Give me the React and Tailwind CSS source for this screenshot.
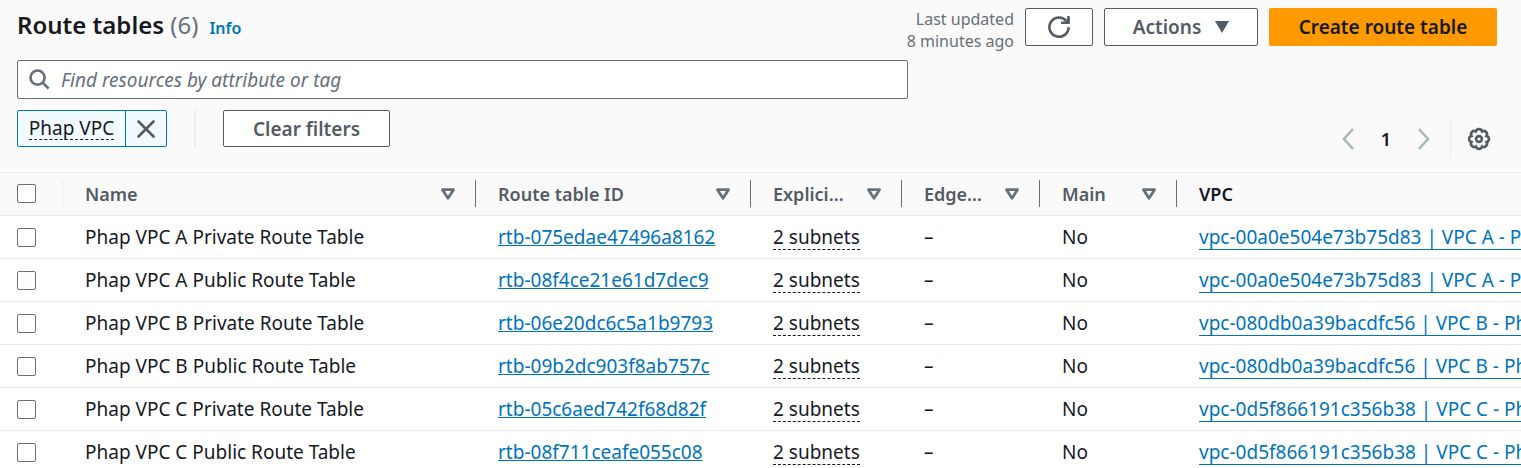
const rows = [
  { name: "Phap VPC A Private Route Table", id: "rtb-075edae47496a8162", vpc: "vpc-00a0e504e73b75d83 | VPC A - Phap VPC" },
  { name: "Phap VPC A Public Route Table", id: "rtb-08f4ce21e61d7dec9", vpc: "vpc-00a0e504e73b75d83 | VPC A - Phap VPC" },
  { name: "Phap VPC B Private Route Table", id: "rtb-06e20dc6c5a1b9793", vpc: "vpc-080db0a39bacdfc56 | VPC B - Phap VPC" },
  { name: "Phap VPC B Public Route Table", id: "rtb-09b2dc903f8ab757c", vpc: "vpc-080db0a39bacdfc56 | VPC B - Phap VPC" },
  { name: "Phap VPC C Private Route Table", id: "rtb-05c6aed742f68d82f", vpc: "vpc-0d5f866191c356b38 | VPC C - Phap VPC" },
  { name: "Phap VPC C Public Route Table", id: "rtb-08f711ceafe055c08", vpc: "vpc-0d5f866191c356b38 | VPC C - Phap VPC" },
];

const columns = [
  { label: "Name", width: "w-[413px]" },
  { label: "Route table ID", width: "w-[275px]" },
  { label: "Explicit subnet associations", short: "Explici…", width: "w-[151px]" },
  { label: "Edge associations", short: "Edge…", width: "w-[138px]" },
  { label: "Main", width: "w-[137px]" },
];

function SearchIcon() {
  return (
    <svg className="size-[21px] shrink-0" viewBox="0 0 22 22" fill="none" stroke="#687078" strokeWidth="2.8" aria-hidden="true">
      <circle cx="9" cy="9" r="7.4" />
      <path d="M14 14l6.5 6.5" />
    </svg>
  );
}

function RefreshIcon() {
  return (
    <svg className="size-[22px]" viewBox="0 0 22 22" fill="none" stroke="#545b64" strokeWidth="2.6" aria-hidden="true">
      <path d="M20.6 11.2A9.6 9.6 0 1 1 18.2 4.8" />
      <path d="M13 6.8h7.4V0" />
      <path d="M15 7.8h6.6V1.4z" fill="#545b64" stroke="none" />
    </svg>
  );
}

function CloseIcon() {
  return (
    <svg className="size-[18px]" viewBox="0 0 18 18" fill="none" stroke="#545b64" strokeWidth="2.6" strokeLinecap="round" aria-hidden="true">
      <path d="M1.5 1.5l15 15M16.5 1.5l-15 15" />
    </svg>
  );
}

function Chevron({ d }) {
  return (
    <svg className="h-[22px] w-[14px]" viewBox="0 0 14 22" fill="none" stroke="#aab7b8" strokeWidth="2.6" aria-hidden="true">
      <path d={d} />
    </svg>
  );
}

function GearIcon() {
  return (
    <svg className="size-6" viewBox="0 0 24 24" fill="none" stroke="#545b64" strokeWidth="2.6" strokeLinejoin="miter" aria-hidden="true">
      <path d="M8.9 4.5A3.2 3.2 0 0 1 15.1 4.5A3.2 3.2 0 0 1 19.5 8.9A3.2 3.2 0 0 1 19.5 15.1A3.2 3.2 0 0 1 15.1 19.5A3.2 3.2 0 0 1 8.9 19.5A3.2 3.2 0 0 1 4.5 15.1A3.2 3.2 0 0 1 4.5 8.9A3.2 3.2 0 0 1 8.9 4.5z" />
      <circle cx="12" cy="12" r="2.9" />
    </svg>
  );
}

function SortIcon() {
  return (
    <svg className="h-3 w-[14px]" viewBox="0 0 14 12" fill="none" stroke="#687078" strokeWidth="2.8" strokeLinejoin="round" aria-hidden="true">
      <path d="M1.5 1.7h11L7 10.2z" />
    </svg>
  );
}

function Check({ label }) {
  return (
    <input
      type="checkbox"
      aria-label={label}
      className="block size-[19px] appearance-none rounded-[2px] border border-[#687078] bg-white checked:bg-[#0073bb]"
    />
  );
}

const button = "flex h-[38px] items-center justify-center rounded-[2px] border border-[#545b64] bg-white font-semibold text-[#545b64]";

export default function App() {
  return (
    <main className="overflow-hidden bg-white font-['Noto_Sans',sans-serif] text-[19px] leading-[26px] text-[#16191f]">
      <header className="bg-[#fafafa] pt-2 pr-6 pb-[14px] pl-[17px]">
        <div className="flex items-start justify-between">
          <div className="flex items-baseline">
            <h1 className="text-2xl leading-[34px] font-semibold">
              Route tables <span className="font-normal text-[#687078]">(6)</span>
            </h1>
            <a href="#info" className="ml-[11px] text-base font-semibold text-[#0073bb]">Info</a>
          </div>
          <div className="flex gap-[11px]">
            <p className="text-right text-base leading-[22px] text-[#687078]">
              Last updated
              <br />8 minutes ago
            </p>
            <button type="button" aria-label="Refresh" className={`${button} w-[68px]`}>
              <RefreshIcon />
            </button>
            <button type="button" className={`${button} w-[154px] gap-[14px]`}>
              Actions
              <svg className="h-3 w-[14px]" viewBox="0 0 14 12" fill="#545b64" aria-hidden="true">
                <path d="M0 0h14L7 12z" />
              </svg>
            </button>
            <button type="button" className="h-[38px] w-[228px] rounded-[2px] bg-[#ff9900] font-semibold text-[#16191f]">
              Create route table
            </button>
          </div>
        </div>

        <div className="mt-2 grid grid-cols-[891fr_589fr]">
          <div>
            <label className="flex h-[39px] items-center gap-[11px] rounded-[2px] border border-[#687078] bg-white px-[11px]">
              <SearchIcon />
              <input
                type="search"
                aria-label="Find resources"
                placeholder="Find resources by attribute or tag"
                className="min-w-0 flex-1 bg-transparent outline-none placeholder:text-[#687078] placeholder:italic"
              />
            </label>
            <div className="mt-[11px] flex h-[37px]">
              <div className="flex w-[150px] overflow-hidden rounded-[2px] border border-[#0073bb] bg-[#f1faff]">
                <button type="button" className="flex flex-1 items-center justify-center border-r border-[#0073bb]">
                  <span className="border-b border-dashed border-[#16191f] leading-[22px]">Phap VPC</span>
                </button>
                <button type="button" aria-label="Remove filter" className="flex w-10 items-center justify-center">
                  <CloseIcon />
                </button>
              </div>
              <div className="mx-[27px] border-r-2 border-[#eaeded]" />
              <button type="button" className="w-[167px] rounded-[2px] border border-[#545b64] bg-white font-semibold text-[#545b64]">
                Clear filters
              </button>
            </div>
          </div>
          <nav aria-label="Pagination" className="mt-[60px] flex h-[38px] items-center justify-end">
            <button type="button" aria-label="Previous page">
              <Chevron d="M12 1L3 11l9 10" />
            </button>
            <button type="button" aria-current="page" className="w-[62px] text-lg font-semibold">1</button>
            <button type="button" aria-label="Next page">
              <Chevron d="M2 1l9 10-9 10" />
            </button>
            <button type="button" aria-label="Preferences" className="ml-[19px] flex h-full items-center border-l border-[#eaeded] pr-[6px] pl-4">
              <GearIcon />
            </button>
          </nav>
        </div>
      </header>

      <table className="w-full table-fixed border-collapse text-left whitespace-nowrap">
        <thead>
          <tr className="h-[43px] border-y border-[#eaeded] bg-[#fafafa] align-top text-lg leading-[26px] text-[#545b64]">
            <th className="w-[63px] p-0 pt-[7px]">
              <div className="flex h-[27px] items-center border-r border-[#eaeded] pl-[17px]">
                <Check label="Select all" />
              </div>
            </th>
            {columns.map((column) => (
              <th key={column.label} className={`${column.width} p-0 pt-[7px] font-semibold`}>
                <div className="flex h-[27px] items-center justify-between border-r border-[#687078] pr-5 pl-[22px]">
                  <span title={column.label}>{column.short ?? column.label}</span>
                  <button type="button" aria-label={`Sort by ${column.label}`}>
                    <SortIcon />
                  </button>
                </div>
              </th>
            ))}
            <th className="p-0 pt-[7px] font-semibold text-[#16191f]">
              <div className="flex h-[27px] items-center pl-[22px]">VPC</div>
            </th>
          </tr>
        </thead>
        <tbody>
          {rows.map((row) => (
            <tr key={row.id} className="h-[43px] border-b border-[#eaeded]">
              <td className="p-0 pl-[17px]">
                <Check label={`Select ${row.name}`} />
              </td>
              <td className="p-0 pl-[22px]">{row.name}</td>
              <td className="p-0 pl-[22px]">
                <a href={`#${row.id}`} className="text-[#0073bb] underline">{row.id}</a>
              </td>
              <td className="p-0 pl-[22px]">
                <button type="button" className="border-b border-dashed border-[#16191f] leading-6">2 subnets</button>
              </td>
              <td className="p-0 pl-[22px]">–</td>
              <td className="p-0 pl-[22px]">No</td>
              <td className="overflow-hidden p-0 pl-[22px]">
                <a href={`#${row.vpc.slice(0, 21)}`} className="inline-block border-b border-[#0073bb] leading-6 text-[#0073bb]">{row.vpc}</a>
              </td>
            </tr>
          ))}
        </tbody>
      </table>
    </main>
  );
}
